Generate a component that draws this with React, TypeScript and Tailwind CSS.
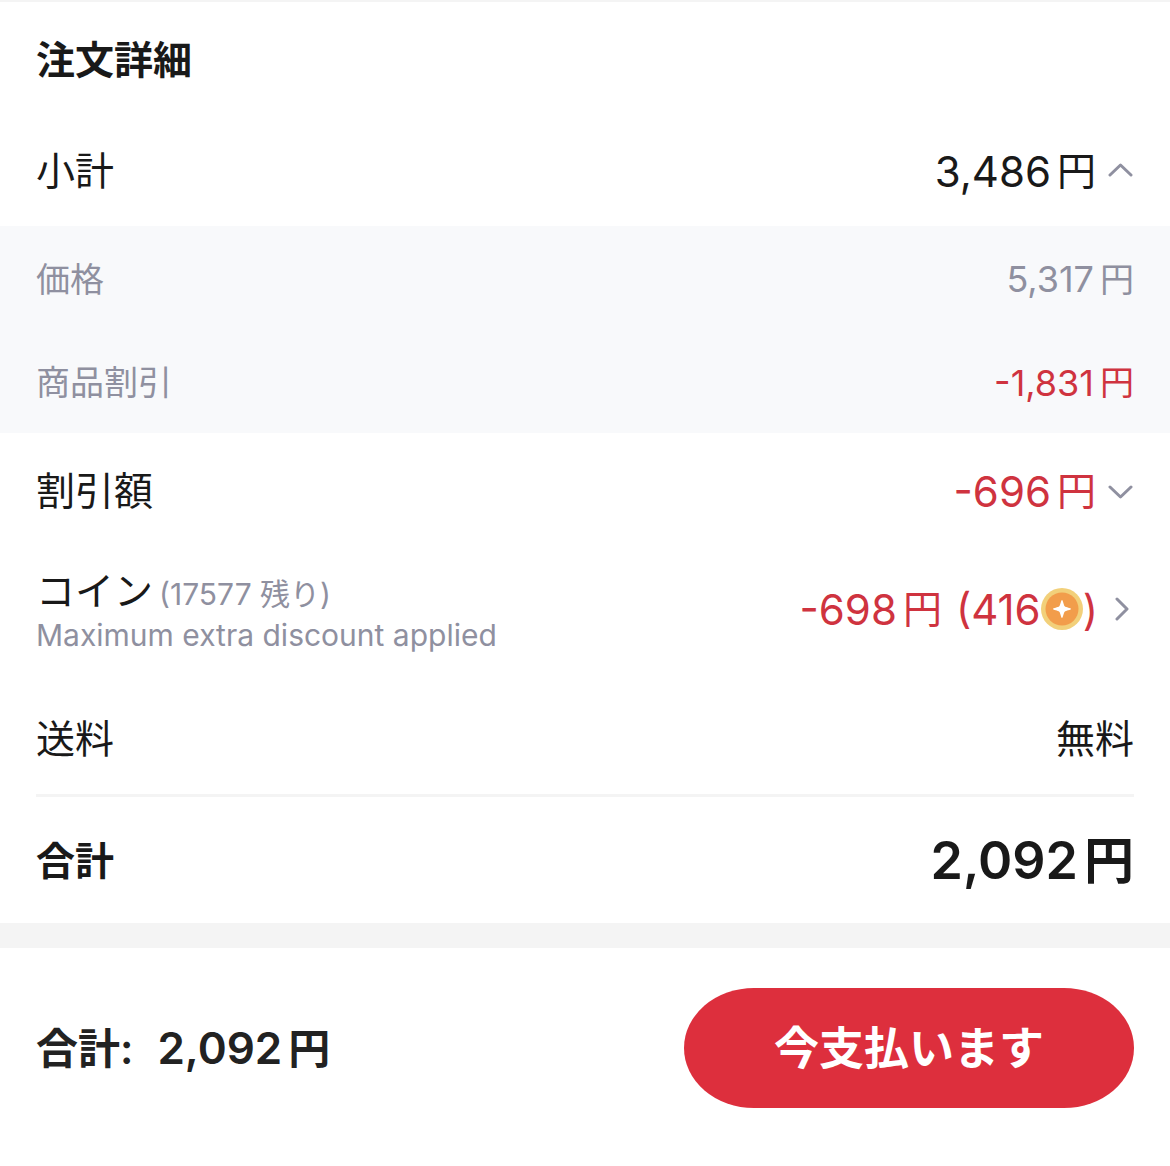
import React, { useState } from 'react';

type AmountProps = {
  value: string;
  className?: string;
  yen?: string;
};

const Amount: React.FC<AmountProps> = ({ value, className = '', yen = 'text-[39px]' }) => (
  <span className={`flex items-center gap-1.5 ${className}`}>
    <span>{value}</span>
    <span className={yen}>円</span>
  </span>
);

type ChevronProps = {
  direction: 'up' | 'down' | 'right';
};

const paths = {
  up: 'M2 12 L12.5 2 L23 12',
  down: 'M2 4 L12.5 14 L23 4',
  right: 'M3 2 L13 12 L3 22',
};

const Chevron: React.FC<ChevronProps> = ({ direction }) => {
  const right = direction === 'right';
  return (
    <svg
      width={right ? 20 : 26}
      height={right ? 24 : 16}
      viewBox={right ? '0 0 20 24' : '0 0 26 16'}
      fill="none"
      stroke="#8f90a0"
      strokeWidth="3"
      strokeLinecap="round"
      strokeLinejoin="round"
      aria-hidden="true"
    >
      <path d={paths[direction]} />
    </svg>
  );
};

const Coin: React.FC = () => (
  <svg width="42" height="42" viewBox="0 0 42 42" role="img" aria-label="コイン">
    <circle cx="21" cy="21" r="21" fill="#f2d07a" />
    <circle cx="21" cy="21" r="16.5" fill="#f29d4b" />
    <path
      d="M21 12 C22 12 22.6 17.2 23.7 18.3 C24.8 19.4 30 20 30 21 C30 22 24.8 22.6 23.7 23.7 C22.6 24.8 22 30 21 30 C20 30 19.4 24.8 18.3 23.7 C17.2 22.6 12 22 12 21 C12 20 17.2 19.4 18.3 18.3 C19.4 17.2 20 12 21 12 Z"
      fill="#fff"
    />
  </svg>
);

const App: React.FC = () => {
  const [open, setOpen] = useState(true);

  return (
    <div className="border-t-2 border-[#f4f4f4] bg-white text-[#191919] font-['Inter','Noto_Sans_CJK_JP',sans-serif]">
      <main>
        <h1 className="flex h-[114px] items-center px-9 pt-0.5 text-[39px] font-bold">注文詳細</h1>

        {/* Subtotal */}
        <button
          type="button"
          aria-expanded={open}
          onClick={() => setOpen(!open)}
          className="flex h-[110px] w-full items-center justify-between px-9 text-left"
        >
          <span className="text-[39px]">小計</span>
          <span className="flex items-center gap-3">
            <Amount value="3,486" className="text-[42px]" />
            <Chevron direction={open ? 'up' : 'down'} />
          </span>
        </button>

        {open && (
          <div className="bg-[#f8f9fb] text-[#8f90a0]">
            <div className="flex h-[104px] items-center justify-between px-9 pt-0.5">
              <span className="text-[34px]">価格</span>
              <Amount value="5,317" className="text-[36px]" yen="text-[34px]" />
            </div>
            <div className="flex h-[103px] items-center justify-between px-9 pt-0.5">
              <span className="text-[34px]">商品割引</span>
              <Amount value="-1,831" className="text-[36px] text-[#cf333f]" yen="text-[34px]" />
            </div>
          </div>
        )}

        {/* Discounts */}
        <button type="button" className="flex h-[116px] w-full items-center justify-between px-9 text-left">
          <span className="text-[39px]">割引額</span>
          <span className="flex items-center gap-3">
            <Amount value="-696" className="text-[42px] text-[#cf333f]" />
            <Chevron direction="down" />
          </span>
        </button>

        {/* Coins */}
        <button type="button" className="mb-4 flex h-[120px] w-full items-center justify-between px-9 text-left">
          <span className="flex flex-col pt-1 text-[30px] text-[#8f90a0]">
            <span className="flex h-12 items-baseline gap-1.5 leading-[48px]">
              <span className="text-[39px] text-[#191919]">コイン</span>
              <span>(17577 残り)</span>
            </span>
            <span className="leading-[40px]">Maximum extra discount applied</span>
          </span>
          <span className="flex items-center gap-4">
            <span className="flex items-center text-[42px] text-[#cf333f]">
              <Amount value="-698" />
              <span className="ml-3.5">(416</span>
              <Coin />
              <span>)</span>
            </span>
            <Chevron direction="right" />
          </span>
        </button>

        {/* Shipping */}
        <div className="mx-9 flex h-[112px] items-center justify-between border-b-3 border-[#f4f4f4] text-[39px]">
          <span>送料</span>
          <span>無料</span>
        </div>

        <div className="flex h-[126px] items-center justify-between px-9 pt-0.5">
          <span className="text-[39px] font-bold">合計</span>
          <Amount value="2,092" className="text-[52px] font-semibold" yen="text-[50px]" />
        </div>
      </main>

      <footer className="flex items-center justify-between border-t-[25px] border-[#f4f4f4] px-9 pt-10 pb-14 font-semibold">
        <p className="flex items-center gap-6 text-[42px] text-[#222]">
          <span>合計:</span>
          <Amount value="2,092" className="text-[44px]" yen="text-[42px]" />
        </p>
        <button
          type="button"
          className="h-[120px] w-[450px] rounded-[70px/60px] bg-[#dd2f3d] pt-0.5 text-[45px] text-white"
        >
          今支払います
        </button>
      </footer>
    </div>
  );
};

export default App;
